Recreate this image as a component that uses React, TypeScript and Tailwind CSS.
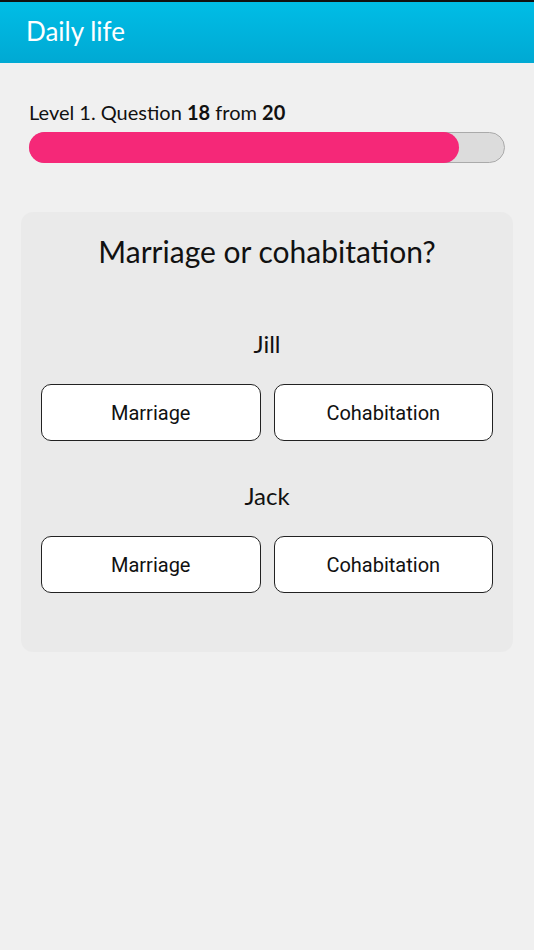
const Choice = ({ name }: { name: string }) => {
  return (
    <div className="flex flex-col">
      <div className="text-center text-[24px] leading-[32px] text-[#111]">{name}</div>
      <div className="mt-[24px] grid grid-cols-2 gap-[13px]">
        <button className="h-[57px] rounded-[10px] border border-[#222] bg-white text-[20px] text-[#111] font-['Roboto',sans-serif]">
          Marriage
        </button>
        <button className="h-[57px] rounded-[10px] border border-[#222] bg-white text-[20px] text-[#111] font-['Roboto',sans-serif]">
          Cohabitation
        </button>
      </div>
    </div>
  )
}

export default function App() {
  return (
    <div className="min-h-[950px] bg-[#f0f0f0] font-['Lato',sans-serif]">
      {/* Верхняя панель */}
      <div className="h-[2px] bg-[#111]"></div>
      <div className="flex h-[61px] items-center bg-gradient-to-b from-[#00bde6] to-[#00a9d3] px-[26px] pb-[2px]">
        <span className="text-[26px] text-white">Daily life</span>
      </div>

      <div className="px-[29px] pt-[35px]">
        <div className="text-[20px] leading-[28px] text-[#111]">
          Level 1. Question <b>18</b> from <b>20</b>
        </div>
        <div className="mt-[6px] flex h-[31px] w-[476px] rounded-full border border-[#aaa] bg-[#dcdcdc]">
          <div className="-my-px -ml-px h-[31px] w-[430px] rounded-full bg-[#f52878]"></div>
        </div>
      </div>

      <div className="mx-[21px] mt-[49px] rounded-[12px] bg-[#eaeaea] px-[20px] pt-[19px] pb-[59px]">
        <div className="text-center text-[30px] leading-[40px] text-[#111]">Marriage or cohabitation?</div>
        <div className="mt-[57px]">
          <Choice name="Jill" />
        </div>
        <div className="mt-[39px]">
          <Choice name="Jack" />
        </div>
      </div>
    </div>
  )
}
